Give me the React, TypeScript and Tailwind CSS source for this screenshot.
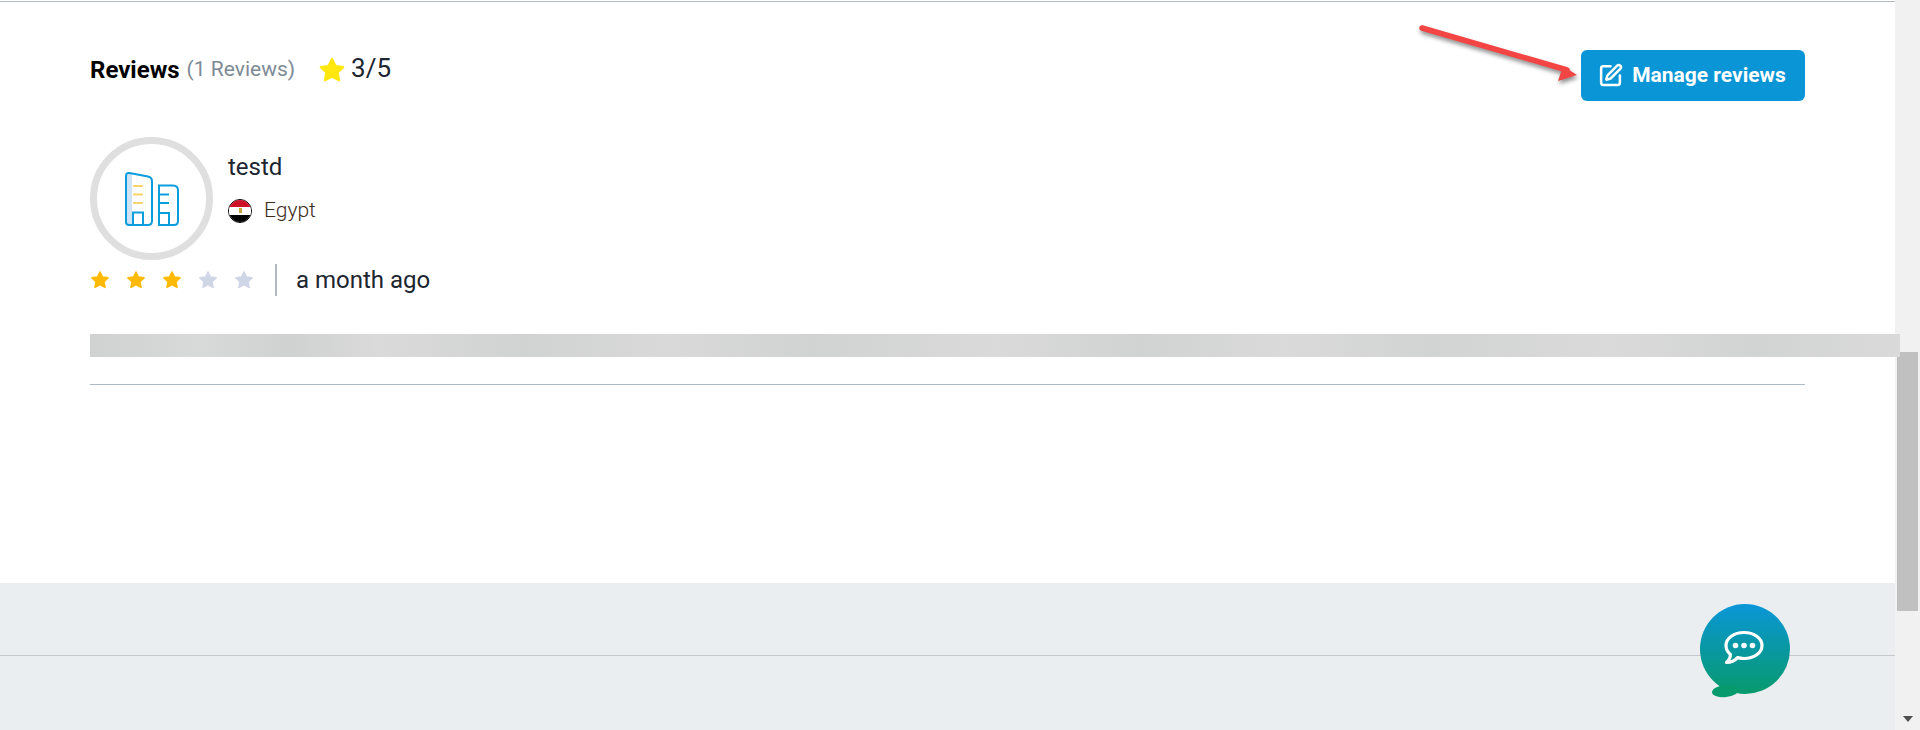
import { SquarePen } from 'lucide-react';

const STAR_POINTS = '12,2.5 14.9,8.6 21.6,9.5 16.7,14.1 18,20.8 12,17.5 6,20.8 7.3,14.1 2.4,9.5 9.1,8.6';

function Star({ color, className }: { color: string; className: string }) {
  return (
    <svg viewBox="0 0 24 24" className={className}>
      <polygon points={STAR_POINTS} fill={color} stroke={color} strokeWidth="2" strokeLinejoin="round" />
    </svg>
  );
}

function BuildingIcon() {
  return (
    <svg viewBox="0 0 56 56" className="w-14 h-14" fill="none">
      <path d="M2 5 Q2 1.5 5.5 2 L8 2.5 V54 H4 Q2 54 2 52 Z" fill="#cfe3f4" />
      <path d="M2 51 V5 Q2 1.5 5.5 2 L24 5.5 Q28 6.5 28 10 V50 Q28 54 24 54 H5 Q2 54 2 51 Z" stroke="#0c9ddc" strokeWidth="2" />
      <path d="M9 54 V41.5 H19 V54" stroke="#0c9ddc" strokeWidth="2" />
      <path d="M9 15 H19 M9 23.5 H19 M9 32 H19" stroke="#fbd36b" strokeWidth="2" />
      <path d="M35 14.5 H49 Q54 14.5 54 19.5 V50 Q54 54 50 54 H35 Z" stroke="#0c9ddc" strokeWidth="2" />
      <path d="M35 54 V42 H45 V54" stroke="#0c9ddc" strokeWidth="2" />
      <path d="M36 23.5 H45 M36 32 H45" stroke="#0c9ddc" strokeWidth="2" />
    </svg>
  );
}

function EgyptFlag() {
  return (
    <div className="w-6 h-6 rounded-full overflow-hidden flex flex-col border border-black">
      <div className="h-[7px] bg-[#ce1126]" />
      <div className="flex-1 bg-white flex items-center justify-center">
        <div className="w-[3px] h-[5px] bg-[#c9a33f]" />
      </div>
      <div className="h-[7px] bg-black" />
    </div>
  );
}

export default function App() {
  return (
    <div className="h-[730px] flex overflow-hidden bg-white font-['Roboto',sans-serif] relative">
      <main className="flex-1 flex flex-col min-w-0">
        <div className="h-px mt-px bg-[#b4babf]" />
        <div className="h-[581px] px-[90px] pt-[48px]">
          <div className="flex justify-between items-start">
            <div className="flex items-center mt-px">
              <span className="text-2xl font-bold text-black">Reviews</span>
              <span className="text-[21px] text-[#7d8a96] ml-[7px]">(1 Reviews)</span>
              <Star color="#ffe70f" className="w-7 h-7 ml-[23px]" />
              <span className="text-[26px] text-[#1c2530] ml-[5px] -mt-[2px]">3/5</span>
            </div>
            <button className="w-56 h-[51px] bg-[#0a96d6] rounded-md text-white text-[21px] font-bold flex items-center justify-center gap-[9px]">
              <SquarePen className="w-[25px] h-[25px] -ml-[2px]" strokeWidth={2.4} />
              Manage reviews
            </button>
          </div>

          <div className="flex mt-9">
            <div className="w-[123px] h-[123px] rounded-full border-[7px] border-[#dfdfdf] flex items-center justify-center">
              <BuildingIcon />
            </div>
            <div className="ml-[15px] pt-[14px]">
              <div className="text-2xl leading-8 text-[#1c2530]">testd</div>
              <div className="flex items-center mt-3">
                <EgyptFlag />
                <span className="ml-3 text-[21px] font-light text-[#3d2b1a]">Egypt</span>
              </div>
            </div>
          </div>

          <div className="flex items-center mt-1">
            <div className="flex gap-4">
              <Star color="#ffba08" className="w-5 h-5" />
              <Star color="#ffba08" className="w-5 h-5" />
              <Star color="#ffba08" className="w-5 h-5" />
              <Star color="#cfd6e6" className="w-5 h-5" />
              <Star color="#cfd6e6" className="w-5 h-5" />
            </div>
            <div className="w-0.5 h-8 bg-[#aebbc6] ml-[21px]" />
            <span className="ml-[19px] text-2xl text-[#1c2530]">a month ago</span>
          </div>

          <div className="relative z-10 w-[1810px] h-[23px] mt-[38px] bg-[linear-gradient(90deg,#d0d1d1,#d8d9d9_6%,#d0d1d1_11%,#dadada_16%,#d1d2d2_24%,#d9d9d9_32%,#d1d2d2_40%,#dadada_50%,#d1d2d2_58%,#dadada_66%,#d2d3d3_74%,#dadada_84%,#d2d3d3_92%,#dadada)]" />
          <div className="h-px bg-[#aebbc6] mt-[27px]" />
        </div>
        <footer className="flex-1 bg-[#eaeef1] pt-[72px]">
          <div className="h-px bg-[#c3c9ce]" />
        </footer>
      </main>

      <div className="w-[25px] bg-[#f1f1f1] flex flex-col items-center pt-[352px] pb-2">
        <div className="w-[21px] h-[259px] bg-[#c0c0c0]" />
        <div className="mt-auto w-0 h-0 border-x-[5px] border-x-transparent border-t-[6px] border-t-[#505050]" />
      </div>

      <svg viewBox="0 0 170 60" className="absolute left-[1415px] top-[22px] w-[170px] h-[60px] drop-shadow-[1px_3px_2px_rgba(0,0,0,0.45)]">
        <path d="M7 6 L152 48" stroke="#f44545" strokeWidth="5.5" strokeLinecap="round" />
        <polygon points="162,53 148,44 143,59" fill="#f44545" />
      </svg>

      <div className="absolute left-[1700px] top-[604px] w-[90px] h-[90px] rounded-full bg-[linear-gradient(180deg,#0a96d8,#079a6c)] flex items-center justify-center">
        <div className="absolute left-[12px] bottom-[-3px] w-[27px] h-[12px] rounded-[50%] -rotate-6 bg-[#079a6c]" />
        <svg viewBox="0 0 42 36" className="relative w-[42px] h-[36px] mb-[2px] -ml-[2px]" fill="none">
          <path d="M21 2.5 C31 2.5 39 8 39 15.5 C39 23 31 28.5 21 28.5 C18.5 28.5 16.5 28.2 14.5 27.6 C12 30.5 8 32.5 3.5 32.5 C6 30 7.5 27 7.4 24.4 C4.5 22 3 19 3 15.5 C3 8 11 2.5 21 2.5 Z" stroke="#fff" strokeWidth="3.2" strokeLinejoin="round" />
          <circle cx="12.5" cy="15.5" r="2.8" fill="#fff" />
          <circle cx="21" cy="15.5" r="2.8" fill="#fff" />
          <circle cx="29.5" cy="15.5" r="2.8" fill="#fff" />
        </svg>
      </div>
    </div>
  );
}
